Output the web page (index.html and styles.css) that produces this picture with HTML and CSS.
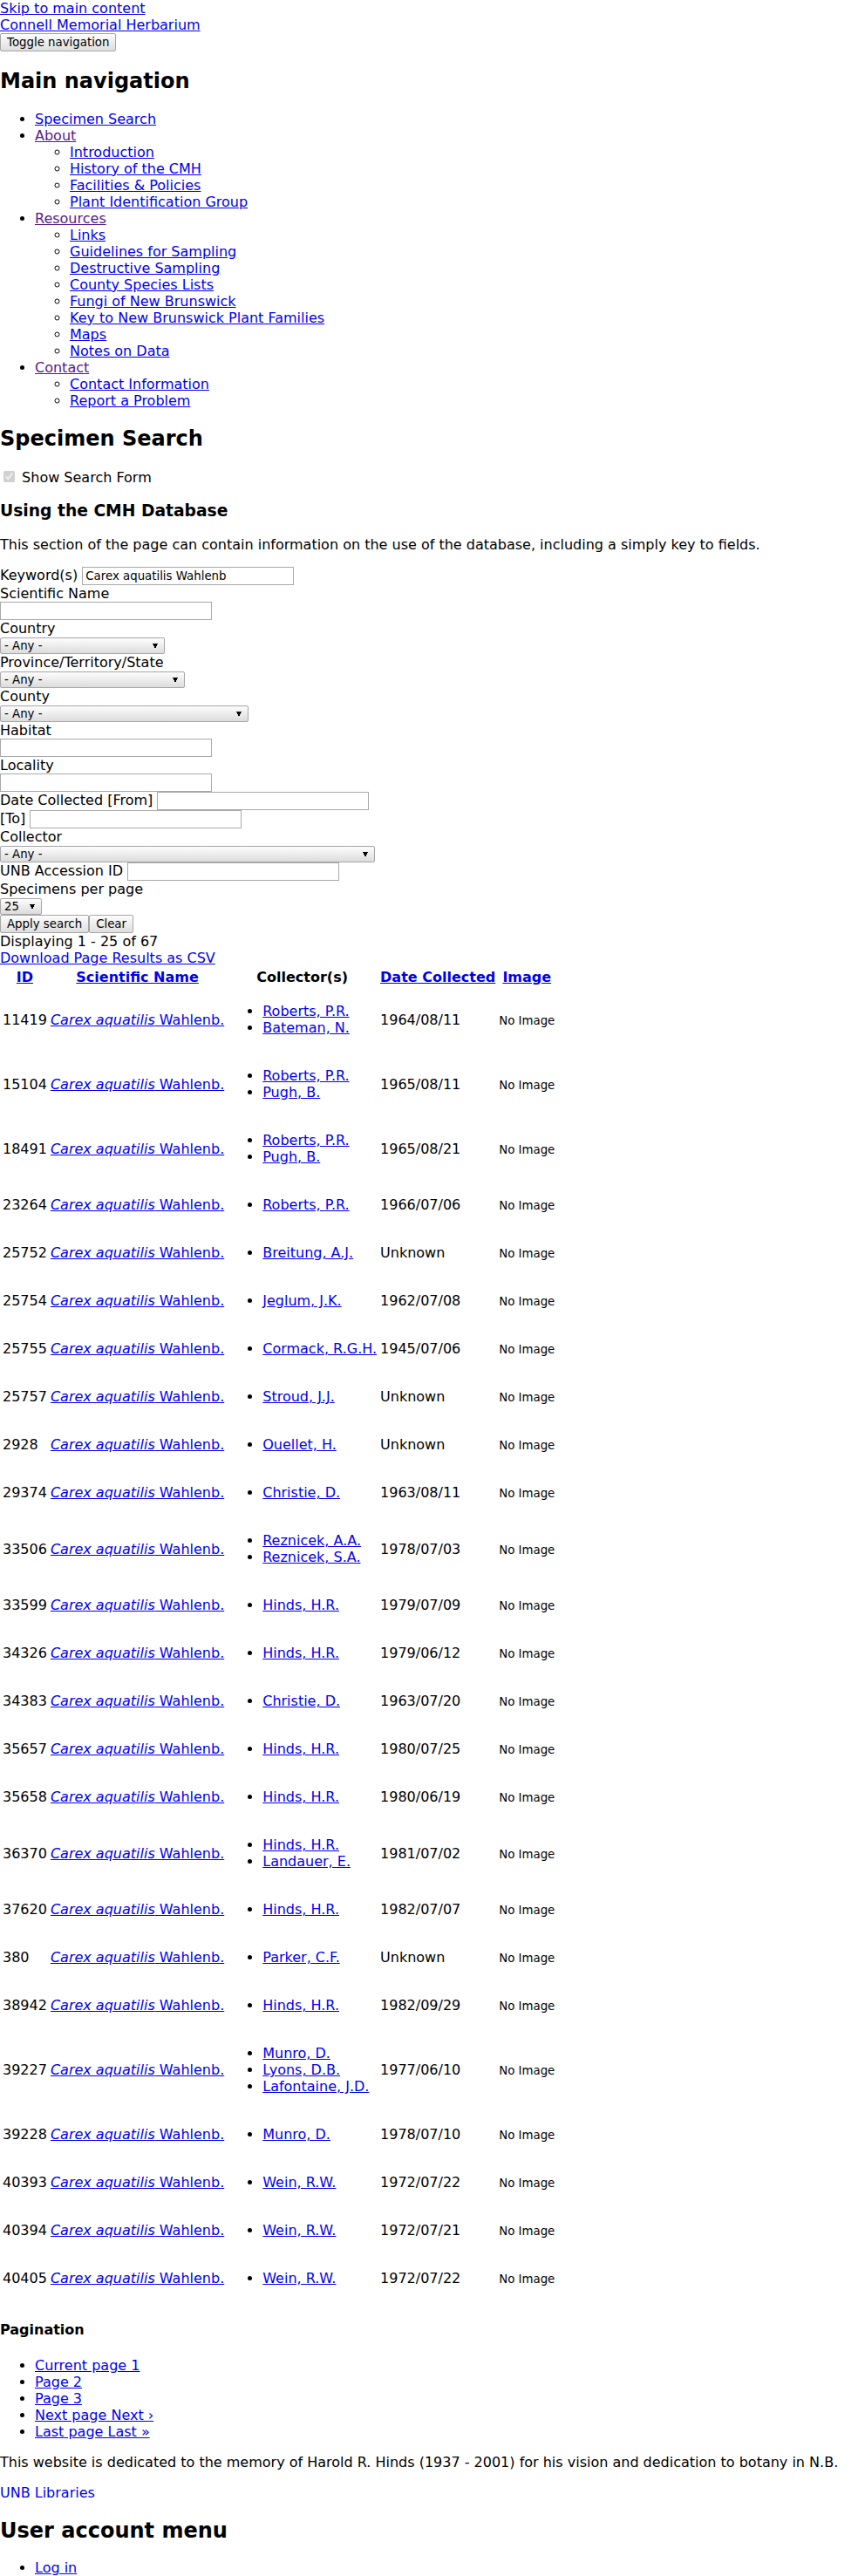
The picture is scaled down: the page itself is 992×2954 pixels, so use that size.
FILE: index.html
```html
<!DOCTYPE html>
<html lang="en">
<head>
<meta charset="utf-8">
<title>Specimen Search | Connell Memorial Herbarium</title>
<link rel="stylesheet" href="styles.css">
</head>
<body>
<div><a href="#main-content">Skip to main content</a></div>
<div><a href="#">Connell Memorial Herbarium</a></div>
<button type="button" class="ctl">Toggle navigation</button>
<nav>
<h2>Main navigation</h2>
<ul>
<li><a href="#">Specimen Search</a></li>
<li><a class="visited" href="#">About</a>
<ul>
<li><a href="#">Introduction</a></li>
<li><a href="#">History of the CMH</a></li>
<li><a href="#">Facilities &amp; Policies</a></li>
<li><a href="#">Plant Identification Group</a></li>
</ul>
</li>
<li><a class="visited" href="#">Resources</a>
<ul>
<li><a href="#">Links</a></li>
<li><a href="#">Guidelines for Sampling</a></li>
<li><a href="#">Destructive Sampling</a></li>
<li><a href="#">County Species Lists</a></li>
<li><a href="#">Fungi of New Brunswick</a></li>
<li><a href="#">Key to New Brunswick Plant Families</a></li>
<li><a href="#">Maps</a></li>
<li><a href="#">Notes on Data</a></li>
</ul>
</li>
<li><a class="visited" href="#">Contact</a>
<ul>
<li><a href="#">Contact Information</a></li>
<li><a href="#">Report a Problem</a></li>
</ul>
</li>
</ul>
</nav>
<main id="main-content">
<h2>Specimen Search</h2>
<div class="toggle-form"><input type="checkbox" id="show-form" checked disabled> <label for="show-form">Show Search Form</label></div>
<h3>Using the CMH Database</h3>
<p>This section of the page can contain information on the use of the database, including a simply key to fields.</p>
<form class="search">
<div><label for="kw">Keyword(s)</label> <input type="text" id="kw" class="ctl txt" value="Carex aquatilis Wahlenb"></div>
<div><label class="blk" for="sci">Scientific Name</label><input type="text" id="sci" class="ctl txt"></div>
<div><label class="blk" for="country">Country</label><select id="country" class="ctl w-country"><option>- Any -</option></select></div>
<div><label class="blk" for="prov">Province/Territory/State</label><select id="prov" class="ctl w-prov"><option>- Any -</option></select></div>
<div><label class="blk" for="county">County</label><select id="county" class="ctl w-county"><option>- Any -</option></select></div>
<div><label class="blk" for="hab">Habitat</label><input type="text" id="hab" class="ctl txt"></div>
<div><label class="blk" for="loc">Locality</label><input type="text" id="loc" class="ctl txt"></div>
<div><label for="dfrom">Date Collected [From]</label> <input type="text" id="dfrom" class="ctl txt"></div>
<div><label for="dto">[To]</label> <input type="text" id="dto" class="ctl txt"></div>
<div><label class="blk" for="coll">Collector</label><select id="coll" class="ctl w-coll"><option>- Any -</option></select></div>
<div><label for="acc">UNB Accession ID</label> <input type="text" id="acc" class="ctl txt"></div>
<div><label class="blk" for="per">Specimens per page</label><select id="per" class="ctl w-per"><option>25</option></select></div>
<div class="actions"><button type="button" class="ctl">Apply search</button><button type="button" class="ctl">Clear</button></div>
</form>
<div>Displaying 1 - 25 of 67</div>
<div><a href="#">Download Page Results as CSV</a></div>
<table class="results">
<thead>
<tr><th><a href="#">ID</a></th><th><a href="#">Scientific Name</a></th><th>Collector(s)</th><th><a href="#">Date Collected</a></th><th><a href="#">Image</a></th></tr>
</thead>
<tbody>
<tr><td>11419</td><td><a href="#"><em>Carex aquatilis</em> Wahlenb.</a></td><td><ul><li><a href="#">Roberts, P.R.</a></li><li><a href="#">Bateman, N.</a></li></ul></td><td>1964/08/11</td><td><small>No Image</small></td></tr>
<tr><td>15104</td><td><a href="#"><em>Carex aquatilis</em> Wahlenb.</a></td><td><ul><li><a href="#">Roberts, P.R.</a></li><li><a href="#">Pugh, B.</a></li></ul></td><td>1965/08/11</td><td><small>No Image</small></td></tr>
<tr><td>18491</td><td><a href="#"><em>Carex aquatilis</em> Wahlenb.</a></td><td><ul><li><a href="#">Roberts, P.R.</a></li><li><a href="#">Pugh, B.</a></li></ul></td><td>1965/08/21</td><td><small>No Image</small></td></tr>
<tr><td>23264</td><td><a href="#"><em>Carex aquatilis</em> Wahlenb.</a></td><td><ul><li><a href="#">Roberts, P.R.</a></li></ul></td><td>1966/07/06</td><td><small>No Image</small></td></tr>
<tr><td>25752</td><td><a href="#"><em>Carex aquatilis</em> Wahlenb.</a></td><td><ul><li><a href="#">Breitung, A.J.</a></li></ul></td><td>Unknown</td><td><small>No Image</small></td></tr>
<tr><td>25754</td><td><a href="#"><em>Carex aquatilis</em> Wahlenb.</a></td><td><ul><li><a href="#">Jeglum, J.K.</a></li></ul></td><td>1962/07/08</td><td><small>No Image</small></td></tr>
<tr><td>25755</td><td><a href="#"><em>Carex aquatilis</em> Wahlenb.</a></td><td><ul><li><a href="#">Cormack, R.G.H.</a></li></ul></td><td>1945/07/06</td><td><small>No Image</small></td></tr>
<tr><td>25757</td><td><a href="#"><em>Carex aquatilis</em> Wahlenb.</a></td><td><ul><li><a href="#">Stroud, J.J.</a></li></ul></td><td>Unknown</td><td><small>No Image</small></td></tr>
<tr><td>2928</td><td><a href="#"><em>Carex aquatilis</em> Wahlenb.</a></td><td><ul><li><a href="#">Ouellet, H.</a></li></ul></td><td>Unknown</td><td><small>No Image</small></td></tr>
<tr><td>29374</td><td><a href="#"><em>Carex aquatilis</em> Wahlenb.</a></td><td><ul><li><a href="#">Christie, D.</a></li></ul></td><td>1963/08/11</td><td><small>No Image</small></td></tr>
<tr><td>33506</td><td><a href="#"><em>Carex aquatilis</em> Wahlenb.</a></td><td><ul><li><a href="#">Reznicek, A.A.</a></li><li><a href="#">Reznicek, S.A.</a></li></ul></td><td>1978/07/03</td><td><small>No Image</small></td></tr>
<tr><td>33599</td><td><a href="#"><em>Carex aquatilis</em> Wahlenb.</a></td><td><ul><li><a href="#">Hinds, H.R.</a></li></ul></td><td>1979/07/09</td><td><small>No Image</small></td></tr>
<tr><td>34326</td><td><a href="#"><em>Carex aquatilis</em> Wahlenb.</a></td><td><ul><li><a href="#">Hinds, H.R.</a></li></ul></td><td>1979/06/12</td><td><small>No Image</small></td></tr>
<tr><td>34383</td><td><a href="#"><em>Carex aquatilis</em> Wahlenb.</a></td><td><ul><li><a href="#">Christie, D.</a></li></ul></td><td>1963/07/20</td><td><small>No Image</small></td></tr>
<tr><td>35657</td><td><a href="#"><em>Carex aquatilis</em> Wahlenb.</a></td><td><ul><li><a href="#">Hinds, H.R.</a></li></ul></td><td>1980/07/25</td><td><small>No Image</small></td></tr>
<tr><td>35658</td><td><a href="#"><em>Carex aquatilis</em> Wahlenb.</a></td><td><ul><li><a href="#">Hinds, H.R.</a></li></ul></td><td>1980/06/19</td><td><small>No Image</small></td></tr>
<tr><td>36370</td><td><a href="#"><em>Carex aquatilis</em> Wahlenb.</a></td><td><ul><li><a href="#">Hinds, H.R.</a></li><li><a href="#">Landauer, E.</a></li></ul></td><td>1981/07/02</td><td><small>No Image</small></td></tr>
<tr><td>37620</td><td><a href="#"><em>Carex aquatilis</em> Wahlenb.</a></td><td><ul><li><a href="#">Hinds, H.R.</a></li></ul></td><td>1982/07/07</td><td><small>No Image</small></td></tr>
<tr><td>380</td><td><a href="#"><em>Carex aquatilis</em> Wahlenb.</a></td><td><ul><li><a href="#">Parker, C.F.</a></li></ul></td><td>Unknown</td><td><small>No Image</small></td></tr>
<tr><td>38942</td><td><a href="#"><em>Carex aquatilis</em> Wahlenb.</a></td><td><ul><li><a href="#">Hinds, H.R.</a></li></ul></td><td>1982/09/29</td><td><small>No Image</small></td></tr>
<tr><td>39227</td><td><a href="#"><em>Carex aquatilis</em> Wahlenb.</a></td><td><ul><li><a href="#">Munro, D.</a></li><li><a href="#">Lyons, D.B.</a></li><li><a href="#">Lafontaine, J.D.</a></li></ul></td><td>1977/06/10</td><td><small>No Image</small></td></tr>
<tr><td>39228</td><td><a href="#"><em>Carex aquatilis</em> Wahlenb.</a></td><td><ul><li><a href="#">Munro, D.</a></li></ul></td><td>1978/07/10</td><td><small>No Image</small></td></tr>
<tr><td>40393</td><td><a href="#"><em>Carex aquatilis</em> Wahlenb.</a></td><td><ul><li><a href="#">Wein, R.W.</a></li></ul></td><td>1972/07/22</td><td><small>No Image</small></td></tr>
<tr><td>40394</td><td><a href="#"><em>Carex aquatilis</em> Wahlenb.</a></td><td><ul><li><a href="#">Wein, R.W.</a></li></ul></td><td>1972/07/21</td><td><small>No Image</small></td></tr>
<tr><td>40405</td><td><a href="#"><em>Carex aquatilis</em> Wahlenb.</a></td><td><ul><li><a href="#">Wein, R.W.</a></li></ul></td><td>1972/07/22</td><td><small>No Image</small></td></tr>
</tbody>
</table>
<nav class="pager">
<h4>Pagination</h4>
<ul>
<li><a href="#">Current page 1</a></li>
<li><a href="#">Page 2</a></li>
<li><a href="#">Page 3</a></li>
<li><a href="#">Next page Next ›</a></li>
<li><a href="#">Last page Last »</a></li>
</ul>
</nav>
</main>
<footer>
<p>This website is dedicated to the memory of Harold R. Hinds (1937 - 2001) for his vision and dedication to botany in N.B.</p>
<p><a class="plain" href="#">UNB Libraries</a></p>
<nav>
<h2>User account menu</h2>
<ul>
<li><a href="#">Log in</a></li>
</ul>
</nav>
</footer>
</body>
</html>
```

FILE: styles.css
```css
body {
  margin: 0;
  font-family: "DejaVu Sans", sans-serif;
  font-size: 16px;
  color: #000;
  background: #fff;
}

a {
  color: #0000ee;
}

a.visited {
  color: #551a8b;
}

a.plain {
  text-decoration: none;
}

.ctl {
  font-family: "DejaVu Sans", sans-serif;
  font-size: 13.333px;
  color: #000;
}

input.txt {
  box-sizing: border-box;
  width: 243px;
  padding: 2px 3px;
  border: 1px solid #a9a9a9;
  background: #fff;
  border-radius: 0;
}

button.ctl {
  margin: 0;
  padding: 2px 7px;
  border: 1px solid #a6a6a6;
  border-radius: 2px;
  background: linear-gradient(#fdfdfd, #dedede);
}

select.ctl {
  -webkit-appearance: none;
  appearance: none;
  box-sizing: border-box;
  height: 19px;
  margin: 0;
  padding: 0 16px 0 4px;
  border: 1px solid #a6a6a6;
  border-radius: 2px;
  background-color: #e6e6e6;
  background-image:
    linear-gradient(to top right, transparent 50%, #000 50%),
    linear-gradient(to top left, transparent 50%, #000 50%),
    linear-gradient(#fdfdfd, #dcdcdc);
  background-position: right 10px top 6px, right 7px top 6px, 0 0;
  background-size: 3px 6px, 3px 6px, 100% 100%;
  background-repeat: no-repeat;
}

.blk {
  display: block;
}

.w-country { width: 189px; }
.w-prov { width: 212px; }
.w-county { width: 285px; }
.w-coll { width: 430px; }
.w-per { width: 48px; }

.results td small {
  font-size: 13.333px;
}
```
